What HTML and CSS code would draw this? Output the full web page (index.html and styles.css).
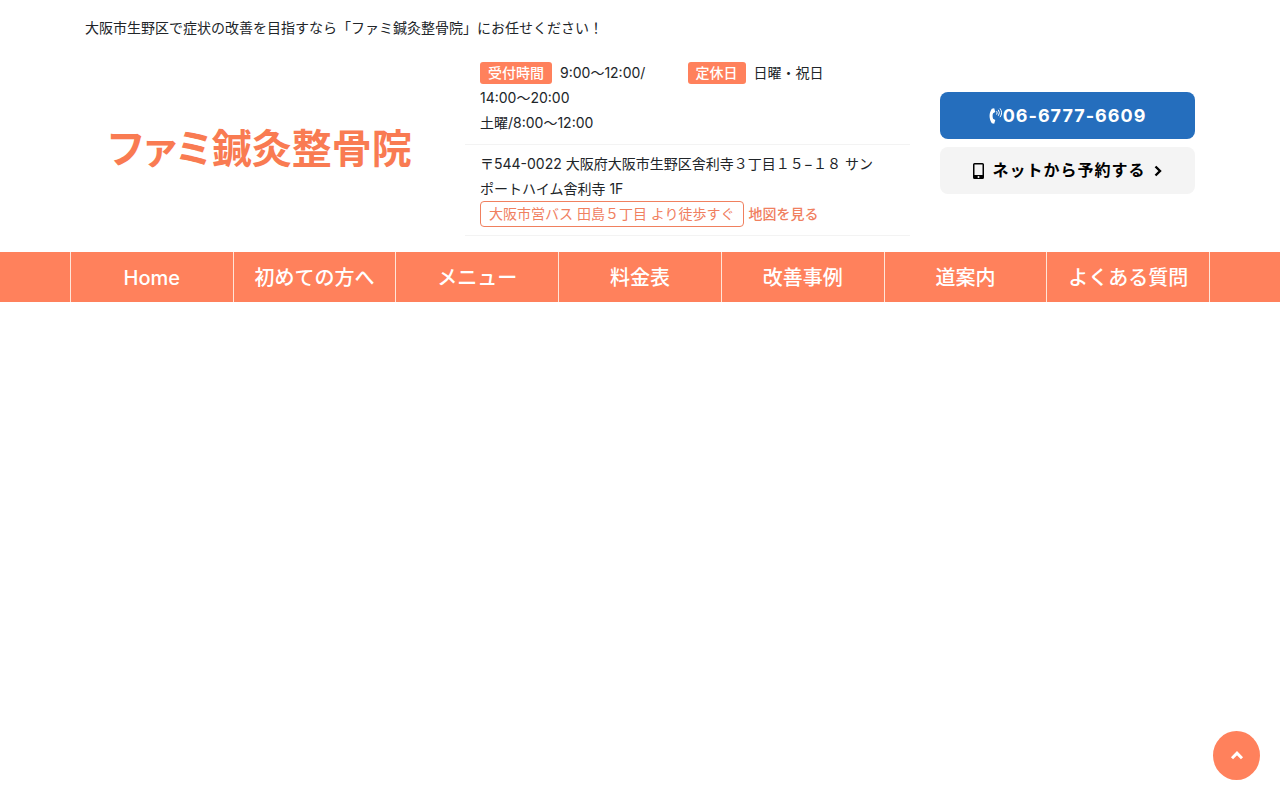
FILE: index.html
```html
<!DOCTYPE html>
<html lang="ja">
<head>
<meta charset="utf-8">
<meta name="viewport" content="width=device-width, initial-scale=1">
<title>ファミ鍼灸整骨院</title>
<link rel="stylesheet" href="styles.css">
</head>
<body>
<header>
  <div class="container">
    <p class="tagline">大阪市生野区で症状の改善を目指すなら「ファミ鍼灸整骨院」にお任せください！</p>
    <div class="header-row">
      <a class="logo" href="#"><span class="logo-kana">ファミ</span>鍼灸整骨院</a>
      <div class="info">
        <div class="info-block hours">
          <p><span class="label">受付時間</span>9:00〜12:00/<br>14:00〜20:00<br>土曜/8:00〜12:00</p>
          <p><span class="label">定休日</span>日曜・祝日</p>
        </div>
        <div class="info-block address">
          <p>〒544-0022 大阪府大阪市生野区舎利寺３丁目１５−１８ サン<br>ポートハイム舎利寺 1F</p>
          <p class="access"><span class="station">大阪市営バス 田島５丁目 より徒歩すぐ</span><a class="map-link" href="#">地図を見る</a></p>
        </div>
      </div>
      <div class="actions">
        <a class="btn btn-phone" href="tel:0667776609"><svg class="icon-phone" viewBox="0 0 14 18" aria-hidden="true"><path d="M5.2 1.2 2.8 1.8C-.2 6.4-.2 11.600 2.800 16.200L5.200 16.800 6.300 13 4.100 11.700C3.400 9.900 3.400 8.100 4.100 6.300L6.300 5Z" fill="currentColor"/><path d="M7.600 4.200q1.100 1.700 0 3.400M9.300 2.800q2.200 3 0 6M11 1.400q3.200 4.400 0 8.800" fill="none" stroke="currentColor" stroke-width="1"/></svg>06-6777-6609</a>
        <a class="btn btn-web" href="#"><svg class="icon-mobile" viewBox="0 0 11 16" aria-hidden="true"><path fill-rule="evenodd" d="M1.500 0h8A1.500 1.500 0 0 1 11 1.500v13a1.500 1.500 0 0 1-1.500 1.500h-8A1.500 1.500 0 0 1 0 14.500v-13A1.500 1.500 0 0 1 1.500 0ZM1.500 1.500V12h8V1.500ZM5.500 13a1 1 0 1 0 0 2 1 1 0 0 0 0-2Z" fill="currentColor"/></svg>ネットから予約する<svg class="icon-next" viewBox="0 0 8 12" aria-hidden="true"><path d="m1.500 1.500 4.500 4.500-4.500 4.500" fill="none" stroke="currentColor" stroke-width="2.400"/></svg></a>
      </div>
    </div>
  </div>
  <nav>
    <ul class="menu">
      <li><a href="#">Home</a></li>
      <li><a href="#">初めての方へ</a></li>
      <li><a href="#">メニュー</a></li>
      <li><a href="#">料金表</a></li>
      <li><a href="#">改善事例</a></li>
      <li><a href="#">道案内</a></li>
      <li><a href="#">よくある質問</a></li>
    </ul>
  </nav>
</header>
<a class="to-top" href="#" aria-label="ページの先頭へ"><svg viewBox="0 0 14 9" aria-hidden="true"><path d="m2 7.200 5-5 5 5" fill="none" stroke="currentColor" stroke-width="3"/></svg></a>
</body>
</html>
```
FILE: styles.css
```css
* {
  box-sizing: border-box;
}

body {
  margin: 0;
  background: #fff;
  color: #212529;
  font-family: Inter, "Noto Sans CJK JP", sans-serif;
  font-size: 14px;
  line-height: 25px;
}

p {
  margin: 0;
}

a {
  color: inherit;
  text-decoration: none;
}

.container {
  max-width: 1140px;
  margin: 0 auto;
  padding: 15px 15px 16px;
}

.header-row {
  display: grid;
  grid-template-columns: 350fr 445fr 255fr;
  column-gap: 30px;
  align-items: center;
  padding-top: 16px;
}

.logo {
  color: #f97b52;
  font-family: "Noto Sans CJK JP", sans-serif;
  font-size: 40px;
  font-weight: 700;
  line-height: 56px;
  text-align: center;
  white-space: nowrap;
}

.logo-kana {
  font-feature-settings: "palt";
}

.info-block {
  padding: 4px 15px 8px;
  border-bottom: 1px solid #f3f3f3;
}

.hours {
  display: grid;
  grid-template-columns: 1fr 1fr;
  padding-bottom: 9px;
}

.address {
  padding-top: 6px;
}

.label {
  display: inline-block;
  margin-right: 8px;
  padding: 0 8px;
  border-radius: 3px;
  background: #ff815c;
  color: #fff;
  font-weight: 500;
  line-height: 22px;
}

.access {
  color: #f0805f;
}

.station {
  display: inline-block;
  margin-right: 5px;
  padding: 0 8px;
  border: 1px solid #f0805f;
  border-radius: 4px;
  line-height: 24px;
}

.map-link {
  font-weight: 500;
}

.actions {
  display: flex;
  flex-direction: column;
  gap: 8px;
  padding-bottom: 6px;
}

.btn {
  display: flex;
  align-items: center;
  justify-content: center;
  height: 47px;
  border-radius: 8px;
  font-weight: 700;
  letter-spacing: 1px;
}

.btn-phone {
  background: #256ebd;
  color: #fff;
  font-size: 18px;
}

.btn-web {
  gap: 8px;
  background: #f4f4f4;
  color: #000;
  font-size: 16px;
}

.icon-phone {
  width: 14px;
  height: 18px;
}

.icon-mobile {
  width: 11px;
  height: 16px;
}

.icon-next {
  width: 8px;
  height: 12px;
}

nav {
  background: #ff815c;
}

.menu {
  display: flex;
  max-width: 1140px;
  margin: 0 auto;
  padding: 0;
  border-right: 1px solid #ffe5d8;
  list-style: none;
}

.menu li {
  flex: 1;
  border-left: 1px solid #ffe5d8;
}

.menu a {
  display: block;
  padding-top: 2px;
  color: #fff;
  font-size: 20px;
  font-weight: 500;
  line-height: 48px;
  text-align: center;
  white-space: nowrap;
}

.to-top {
  position: fixed;
  right: 20px;
  bottom: 20px;
  display: flex;
  align-items: center;
  justify-content: center;
  width: 47px;
  height: 49px;
  border-radius: 50%;
  background: #ff815c;
  color: #fff;
}

.to-top svg {
  width: 14px;
  height: 9px;
}
```
